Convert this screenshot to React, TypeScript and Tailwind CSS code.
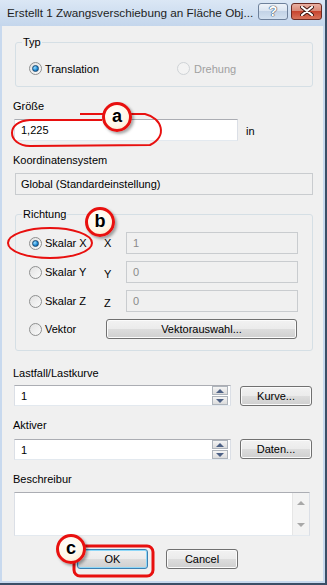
import React from 'react';

const font = "font-['Liberation_Sans',sans-serif] text-[11px] leading-[16px]";

function Radio({ checked, disabled }: { checked?: boolean; disabled?: boolean }) {
  return (
    <span
      className={`flex h-[13px] w-[13px] shrink-0 items-center justify-center rounded-full border ${
        disabled ? 'border-[#cfd3d6] bg-[#f3f3f3]' : 'border-[#8e8f8f] bg-gradient-to-br from-[#e2e2e2] to-[#fafafa]'
      }`}
    >
      {checked && (
        <span className="h-[7px] w-[7px] rounded-full border border-[#1b4a72] bg-[radial-gradient(circle_at_35%_35%,#9fe0ff,#1e8ad6_55%,#0e4d85)]" />
      )}
    </span>
  );
}

function Button({ label, focused, className }: { label: string; focused?: boolean; className: string }) {
  return (
    <div
      className={`flex items-center justify-center rounded-[3px] border ${
        focused ? 'border-[#3c7fb1] shadow-[inset_0_0_0_1px_#8fd8f8]' : 'border-[#707070] shadow-[inset_0_0_0_1px_#fbfbfb]'
      } bg-[linear-gradient(#f2f2f2_0%,#ebebeb_50%,#dddddd_50%,#cfcfcf_100%)] text-black ${className}`}
    >
      {label}
    </div>
  );
}

function GroupBox({ title, className, children }: { title: string; className: string; children: React.ReactNode }) {
  return (
    <div className={`relative rounded-[3px] border border-[#d5dfe5] ${className}`}>
      <span className="absolute left-[6px] top-[-9px] bg-[#f0f0f0] px-[1px]">{title}</span>
      {children}
    </div>
  );
}

function Spin() {
  return (
    <div className="ml-auto mr-[2px] flex flex-col gap-[1px]">
      <div className="flex h-[9px] w-[16px] items-center justify-center border border-[#aeb4bb] bg-gradient-to-b from-[#f5f5f5] to-[#dcdcdc]">
        <span className="h-0 w-0 border-x-[4px] border-b-[4px] border-x-transparent border-b-[#4d6185]" />
      </div>
      <div className="flex h-[9px] w-[16px] items-center justify-center border border-[#aeb4bb] bg-gradient-to-b from-[#f5f5f5] to-[#dcdcdc]">
        <span className="h-0 w-0 border-x-[4px] border-t-[4px] border-x-transparent border-t-[#4d6185]" />
      </div>
    </div>
  );
}

function Badge({ letter, className }: { letter: string; className: string }) {
  return (
    <div
      className={`absolute flex h-[30px] w-[30px] items-center justify-center rounded-full border-[3px] border-[#e8100f] bg-[radial-gradient(circle_at_40%_35%,#ffffff,#fff6e6_60%,#f4dfbd)] font-['Liberation_Sans',sans-serif] text-[18px] font-bold leading-none text-black shadow-[2px_2px_3px_rgba(0,0,0,0.35)] ${className}`}
    >
      <span className="-mt-[2px]">{letter}</span>
    </div>
  );
}

export default function App() {
  const rows = [
    { label: 'Skalar X', axis: 'X', value: '1', checked: true, dy: 'mt-0' },
    { label: 'Skalar Y', axis: 'Y', value: '0', checked: false, dy: 'mt-[3px]' },
    { label: 'Skalar Z', axis: 'Z', value: '0', checked: false, dy: 'mt-[3px]' },
  ];

  return (
    <div className={`relative h-[585px] w-[327px] overflow-hidden border-b-2 border-r-2 border-b-[#3b4e66] border-r-[#3b4e66] bg-[#c8d9ee] ${font} text-black`}>
      {/* Titelleiste */}
      <div className="flex h-[26px] items-center bg-gradient-to-b from-[#dbe7f5] to-[#c4d6ec] pl-[7px]">
        <span className="whitespace-nowrap text-[11.75px] text-[#1e1e1e]">Erstellt 1 Zwangsverschiebung an Fläche Obj...</span>
        <div className="ml-auto mr-[3px] mt-[-4px] flex gap-[3px]">
          <div className="flex h-[17px] w-[30px] items-center justify-center rounded-[3px] border border-[#6e819b] bg-[linear-gradient(#eef3f9_0%,#dbe5f1_45%,#c3d3e6_50%,#d3e1f0_100%)]">
            <span className="font-['Liberation_Sans',sans-serif] text-[14px] font-bold leading-none text-white [text-shadow:0_0_1px_#34465e,0_0_1px_#34465e,0_0_1px_#34465e]">?</span>
          </div>
          <div className="flex h-[17px] w-[31px] items-center justify-center rounded-[3px] border border-[#6b2a22] bg-[linear-gradient(#eab0a2_0%,#d98a78_45%,#c7452f_50%,#d8735a_100%)]">
            <svg width="14" height="10" viewBox="0 0 14 10">
              <path d="M2 1 L12 9 M12 1 L2 9" stroke="#3d1610" strokeWidth="4" strokeLinecap="round" />
              <path d="M2 1 L12 9 M12 1 L2 9" stroke="#ffffff" strokeWidth="2.2" strokeLinecap="round" />
            </svg>
          </div>
        </div>
      </div>

      {/* Inhalt */}
      <div className="ml-[2px] h-[555px] w-[321px] bg-[#f0f0f0]">
        <div className="pt-[16px]" />
        <GroupBox title="Typ" className="ml-[13px] h-[45px] w-[298px]">
          <div className="flex h-full items-center pt-[8px]">
            <div className="ml-[13px] flex items-center gap-[3px]">
              <Radio checked />
              <span>Translation</span>
            </div>
            <div className="ml-[78px] flex items-center gap-[4px] text-[#a0a0a0]">
              <Radio disabled />
              <span>Drehung</span>
            </div>
          </div>
        </GroupBox>

        <div className="ml-[11px] mt-[11px]">Größe</div>
        <div className="mt-[5px] flex items-center">
          <div className="ml-[12px] flex h-[22px] w-[224px] items-center border border-[#abadb3] border-b-[#e3e9ef] border-x-[#dbdfe6] bg-white pl-[6px]">1,225</div>
          <span className="ml-[8px] mt-[2px]">in</span>
        </div>

        <div className="ml-[11px] mt-[11px]">Koordinatensystem</div>
        <div className="ml-[13px] mt-[5px] flex h-[22px] w-[298px] items-center border border-[#c9cccf] bg-[#f0f0f0] pl-[5px]">
          Global (Standardeinstellung)
        </div>

        <GroupBox title="Richtung" className="ml-[13px] mt-[19px] h-[137px] w-[298px]">
          <div className="pt-[17px]">
            {rows.map((r) => (
              <div key={r.label} className={`flex h-[22px] items-center ${r.dy} mb-[7px]`}>
                <div className="ml-[13px] flex w-[75px] items-center gap-[3px]">
                  <Radio checked={r.checked} />
                  <span>{r.label}</span>
                </div>
                <span className={`w-[22px] ${r.axis === 'X' ? '' : 'mt-[4px]'}`}>{r.axis}</span>
                <div className="flex h-[22px] w-[172px] items-center border border-[#c9cccf] bg-[#f0f0f0] pl-[6px] text-[#8a8a8a]">{r.value}</div>
              </div>
            ))}
            <div className="flex h-[20px] items-center">
              <div className="ml-[13px] flex w-[77px] items-center gap-[3px]">
                <Radio />
                <span>Vektor</span>
              </div>
              <Button label="Vektorauswahl..." className="h-[20px] w-[191px]" />
            </div>
          </div>
        </GroupBox>

        <div className="ml-[11px] mt-[14px]">Lastfall/Lastkurve</div>
        <div className="mt-[4px] flex items-center">
          <div className="ml-[12px] flex h-[21px] w-[217px] items-center border border-[#abadb3] border-b-[#e3e9ef] border-x-[#dbdfe6] bg-white pl-[6px]">
            <span>1</span>
            <Spin />
          </div>
          <Button label="Kurve..." className="ml-[9px] h-[20px] w-[72px]" />
        </div>

        <div className="ml-[11px] mt-[11px]">Aktiver</div>
        <div className="mt-[6px] flex items-start">
          <div className="ml-[12px] flex h-[21px] w-[217px] items-center border border-[#abadb3] border-b-[#e3e9ef] border-x-[#dbdfe6] bg-white pl-[6px]">
            <span>1</span>
            <Spin />
          </div>
          <Button label="Daten..." className="ml-[9px] h-[20px] w-[72px]" />
        </div>

        <div className="ml-[11px] mt-[11px]">Beschreibur</div>
        <div className="ml-[12px] mt-[5px] flex h-[44px] w-[296px] border border-[#abadb3] border-b-[#e3e9ef] border-x-[#dbdfe6] bg-white">
          <div className="ml-auto flex w-[17px] flex-col items-center justify-between border-l border-[#e6e6e6] bg-[#f3f3f3] py-[8px]">
            <span className="h-0 w-0 border-x-[4px] border-b-[4px] border-x-transparent border-b-[#a8a8a8]" />
            <span className="h-0 w-0 border-x-[4px] border-t-[4px] border-x-transparent border-t-[#a8a8a8]" />
          </div>
        </div>

        <div className="mt-[13px] flex">
          <Button label="OK" focused className="ml-[75px] h-[20px] w-[71px]" />
          <Button label="Cancel" className="ml-[18px] h-[20px] w-[72px]" />
        </div>
      </div>

      {/* Markierungen */}
      <svg className="pointer-events-none absolute left-0 top-0" width="327" height="585">
        <path d="M 80 114 L 145 114 C 162 118, 168 136, 150 145 L 30 146 C 6 145, 6 121, 30 120 L 102 120" fill="none" stroke="#e8100f" strokeWidth="2" />
        <ellipse cx="50" cy="243" rx="42" ry="15" fill="none" stroke="#e8100f" strokeWidth="2" />
        <rect x="74" y="546" width="79" height="30" rx="6" fill="none" stroke="#e8100f" strokeWidth="3" />
      </svg>
      <Badge letter="a" className="left-[102px] top-[102px]" />
      <Badge letter="b" className="left-[85px] top-[207px]" />
      <Badge letter="c" className="left-[56px] top-[534px]" />
    </div>
  );
}
